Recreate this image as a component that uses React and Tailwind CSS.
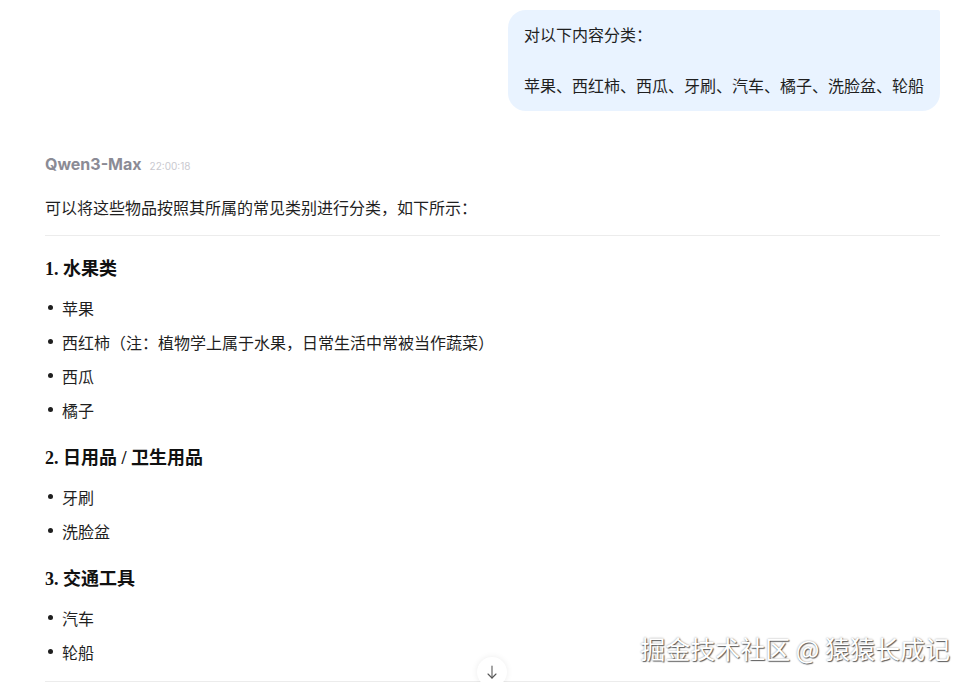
import React from "react";

const sections = [
  {
    title: "1. 水果类",
    items: ["苹果", "西红柿（注：植物学上属于水果，日常生活中常被当作蔬菜）", "西瓜", "橘子"],
  },
  { title: "2. 日用品 / 卫生用品", items: ["牙刷", "洗脸盆"] },
  { title: "3. 交通工具", items: ["汽车", "轮船"] },
];

function App() {
  return (
    <div
      className="relative h-[682px] overflow-hidden bg-white text-[#1f1f1f]"
      style={{ fontFamily: '"Noto Sans CJK SC", "Noto Sans", sans-serif' }}
    >
      <div className="pl-[45px] pr-[32px] pt-[10px]">
        {/* user message */}
        <div className="flex justify-end">
          <div className="rounded-[18px] rounded-tr-[2px] bg-[#e9f3ff] px-4 py-3 text-[16px] leading-[25.5px]">
            <p>对以下内容分类：</p>
            <p>&nbsp;</p>
            <p>苹果、西红柿、西瓜、牙刷、汽车、橘子、洗脸盆、轮船</p>
          </div>
        </div>

        {/* assistant */}
        <div className="mt-[41px] flex items-baseline gap-2">
          <span
            className="text-[16px] font-bold text-[#8b8b95]"
            style={{ fontFamily: "Inter, sans-serif" }}
          >
            Qwen3-Max
          </span>
          <span className="text-[10px] text-[#c9c9cf]" style={{ fontFamily: "Inter, sans-serif" }}>
            22:00:18
          </span>
        </div>

        <p className="mt-[17px] text-[16px] leading-[28px]">
          可以将这些物品按照其所属的常见类别进行分类，如下所示：
        </p>

        <div className="mt-[14px] h-px bg-[#ececec]" />

        {sections.map((s, i) => (
          <div key={s.title}>
            <h3
              className={`${i === 0 ? "mt-[19px]" : "mt-[17px]"} mb-[8px] text-[18px] font-bold leading-[28px] text-[#111]`}
              style={{ fontFamily: '"Liberation Serif", "Noto Sans CJK SC", serif' }}
            >
              {s.title}
            </h3>
            <ul>
              {s.items.map((it) => (
                <li key={it} className="flex h-[34px] items-center text-[16px]">
                  <span className="ml-[3px] mr-[9px] h-[5px] w-[5px] rounded-full bg-[#1f1f1f]" />
                  {it}
                </li>
              ))}
            </ul>
          </div>
        ))}

        <div className="mt-[12px] h-px bg-[#ececec]" />
      </div>

      {/* scroll down button */}
      <button className="absolute left-[477px] top-[657px] flex h-[30px] w-[30px] items-center justify-center rounded-full bg-white shadow-[0_0_6px_rgba(0,0,0,0.08)]">
        <svg width="16" height="16" viewBox="0 0 24 24" fill="none" stroke="#555" strokeWidth="1.6" strokeLinecap="round" strokeLinejoin="round">
          <path d="M12 3v18" />
          <path d="M6 15l6 6 6-6" />
        </svg>
      </button>

      {/* watermark */}
      <div
        className="absolute right-[22px] top-[632px] text-[25px] leading-[32px] text-white"
        style={{ textShadow: "1px 1px 1px rgba(0,0,0,0.6), 0 0 2px rgba(0,0,0,0.4)" }}
      >
        掘金技术社区 @ 猿猿长成记
      </div>
    </div>
  );
}

export default App;
